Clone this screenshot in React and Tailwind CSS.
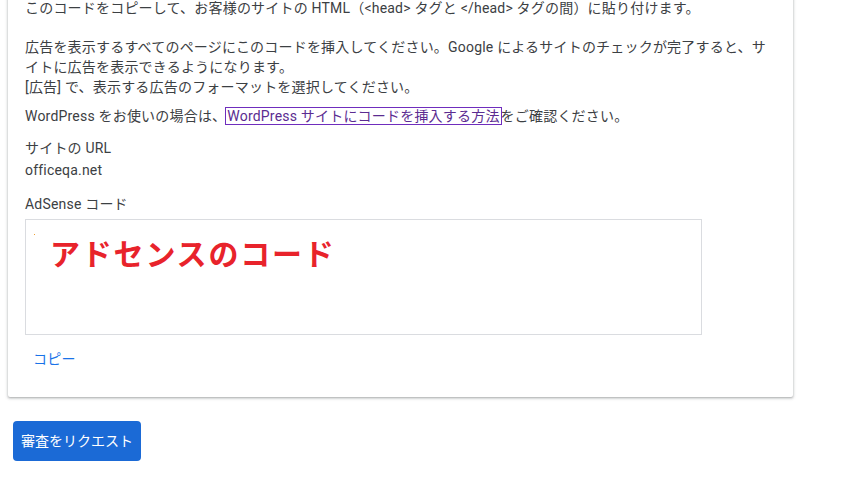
export default function App() {
  const font = { fontFamily: "Roboto, 'Noto Sans CJK JP', sans-serif" };
  return (
    <div className="min-h-[481px] w-[844px] overflow-hidden bg-white px-2" style={font}>
      <div className="-mt-[20px] w-[785px] rounded-b-[2px] bg-white pt-[18px] pb-7 pl-[17px] pr-[17px] text-[14px] leading-[20px] tracking-[0.2px] text-[#3c4043] shadow-[0_1px_2px_0_rgba(60,64,67,0.3),0_1px_3px_1px_rgba(60,64,67,0.15)]">
        <p>このコードをコピーして、お客様のサイトの HTML（&lt;head&gt; タグと &lt;/head&gt; タグの間）に貼り付けます。</p>
        <p className="mt-[19px]">
          広告を表示するすべてのページにこのコードを挿入してください。Google によるサイトのチェックが完了すると、サイトに広告を表示できるようになります。
          <br />
          [広告] で、表示する広告のフォーマットを選択してください。
        </p>
        <p className="mt-[9px]">
          WordPress をお使いの場合は、
          <a className="outline outline-1 outline-[#6f2dbd] px-[1px] text-[#5b2c91]">WordPress サイトにコードを挿入する方法</a>
          をご確認ください。
        </p>
        <p className="mt-[12px]">サイトの URL</p>
        <p className="mt-[2px]">officeqa.net</p>
        <p className="mt-[14px]">AdSense コード</p>
        <div className="relative mt-[5px] h-[116px] w-[677px] border border-[#dadce0] pt-[12px] pl-[24px]">
          <span className="absolute left-[8px] top-[14px] h-[1px] w-[1px] bg-[#f0a030]"></span>
          <span className="block text-[30px] font-bold leading-[40px] tracking-[1.8px] text-[#e8232b]" style={{ fontFamily: "'Noto Sans CJK JP', sans-serif" }}>
            アドセンスのコード
          </span>
        </div>
        <p className="mt-[14px] ml-2 text-[#1a73e8]">コピー</p>
      </div>
      <button className="mt-6 ml-[5px] flex h-[40px] items-center rounded-[4px] bg-[#1b6ad6] px-[8px] text-[14px] text-white" style={font}>
        審査をリクエスト
      </button>
    </div>
  );
}
